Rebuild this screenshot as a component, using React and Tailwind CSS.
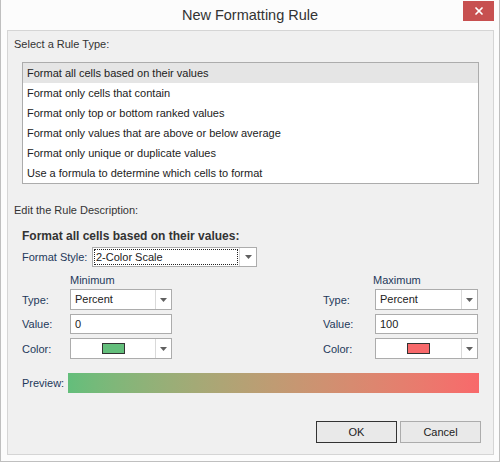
import { X } from "lucide-react";

const font = { fontFamily: '"Liberation Sans", Arial, sans-serif' };

function Arrow() {
  return (
    <svg width="7" height="4" viewBox="0 0 7 4">
      <path d="M0 0h7L3.5 4z" fill="#606060" />
    </svg>
  );
}

function Combo({ children, width }) {
  return (
    <div className={`${width} h-[21px] flex border border-[#acacac] bg-white`}>
      <div className="flex-1 flex items-center px-[4px] text-[11px] text-[#222]">
        {children}
      </div>
      <div className="w-[16px] border-l border-[#d9d9d9] flex items-center justify-center">
        <Arrow />
      </div>
    </div>
  );
}

function Field({ label, labelWidth, children }) {
  return (
    <div className="flex items-center">
      <div className={`${labelWidth} text-[11px] leading-[16px] text-[#1e395b] whitespace-nowrap`}>
        {label}
      </div>
      {children}
    </div>
  );
}

function Swatch({ color }) {
  return (
    <div className="flex-1 flex items-center justify-center">
      <div className={`w-[23px] h-[11px] border border-[#333] ${color}`} />
    </div>
  );
}

function Column({ title, type, value, swatch, titleOffset, labelWidth, width }) {
  return (
    <div className="flex flex-col">
      <div className={`h-[16px] leading-[16px] text-[11px] text-[#1e395b] ${titleOffset}`}>
        {title}
      </div>
      <div className="mt-[1px] flex flex-col gap-[4px]">
        <Field label="Type:" labelWidth={labelWidth}>
          <Combo width={width}>{type}</Combo>
        </Field>
        <Field label="Value:" labelWidth={labelWidth}>
          <div className={`${width} h-[20px] border border-[#acacac] bg-white flex items-center px-[4px] text-[11px] text-[#222]`}>
            {value}
          </div>
        </Field>
        <Field label="Color:" labelWidth={labelWidth}>
          <div className={`${width} h-[21px] flex border border-[#acacac] bg-white`}>
            <Swatch color={swatch} />
            <div className="w-[16px] border-l border-[#d9d9d9] flex items-center justify-center">
              <Arrow />
            </div>
          </div>
        </Field>
      </div>
    </div>
  );
}

const ruleTypes = [
  "Format all cells based on their values",
  "Format only cells that contain",
  "Format only top or bottom ranked values",
  "Format only values that are above or below average",
  "Format only unique or duplicate values",
  "Use a formula to determine which cells to format",
];

export default function App() {
  return (
    <div
      className="w-[500px] h-[462px] border-x border-b border-[#bfbfbf] bg-[#fcfcfc] flex flex-col"
      style={font}
    >
      <div className="relative h-[30px] shrink-0 flex items-center justify-center">
        <span className="text-[14.5px] text-[#333] leading-none">New Formatting Rule</span>
        <button className="absolute right-[5px] top-[1px] w-[31px] h-[20px] bg-[#c75050] flex items-center justify-center text-white">
          <X size={12} strokeWidth={3.5} />
        </button>
      </div>

      <div className="flex-1 ml-[6px] mr-[5px] mb-[6px] bg-[#f0f0f0] border border-[#d5d5d5] flex flex-col">
        <div className="pl-[6px] pt-[5px] h-[21px] leading-[16px] text-[11px] text-[#333]">
          Select a Rule Type:
        </div>

        <div className="mx-[14px] mt-[10px] border border-[#acacac] bg-white flex flex-col">
          {ruleTypes.map((t, i) => (
            <div
              key={t}
              className={`h-[20px] flex items-center px-[4px] text-[11px] text-[#222] ${
                i === 0 ? "bg-[#e5e5e5]" : ""
              }`}
            >
              {t}
            </div>
          ))}
        </div>

        <div className="pl-[6px] mt-[18px] h-[16px] leading-[16px] text-[11px] text-[#333]">
          Edit the Rule Description:
        </div>

        <div className="px-[14px] flex flex-col">
          <div className="mt-[10px] h-[16px] leading-[16px] text-[12px] font-bold text-[#333]">
            Format all cells based on their values:
          </div>

          <div className="mt-[3px] flex items-center">
            <div className="w-[70px] text-[11px] leading-[16px] text-[#1e395b] whitespace-nowrap">
              Format Style:
            </div>
            <div className="w-[165px] h-[20px] flex border border-[#acacac] bg-white">
              <div className="flex-1 p-[1px]">
                <div className="h-full border border-dotted border-[#222] flex items-center px-[1px] text-[11px] text-[#222]">
                  2-Color Scale
                </div>
              </div>
              <div className="w-[17px] border-l border-[#d9d9d9] flex items-center justify-center">
                <Arrow />
              </div>
            </div>
          </div>

          <div className="mt-[5px] flex justify-between pr-[1px]">
            <Column
              title="Minimum"
              type="Percent"
              value="0"
              swatch="bg-[#63be7b]"
              titleOffset="pl-[48px]"
              labelWidth="w-[48px]"
              width="w-[102px]"
            />
            <Column
              title="Maximum"
              type="Percent"
              value="100"
              swatch="bg-[#f8696b]"
              titleOffset="pl-[50px]"
              labelWidth="w-[52px]"
              width="w-[103px]"
            />
          </div>

          <div className="mt-[14px] flex items-center">
            <div className="w-[46px] text-[11px] leading-[16px] text-[#1e395b]">Preview:</div>
            <div className="flex-1 h-[20px] bg-gradient-to-r from-[#63be7b] to-[#f8696b]" />
          </div>
        </div>

        <div className="mt-[28px] pr-[12px] flex justify-end gap-[3px]">
          <button className="w-[81px] h-[22px] border border-[#333] bg-[#e9e9e9] text-[11px] text-[#222]">
            OK
          </button>
          <button className="w-[81px] h-[22px] border border-[#acacac] bg-[#e9e9e9] text-[11px] text-[#222]">
            Cancel
          </button>
        </div>
      </div>
    </div>
  );
}
